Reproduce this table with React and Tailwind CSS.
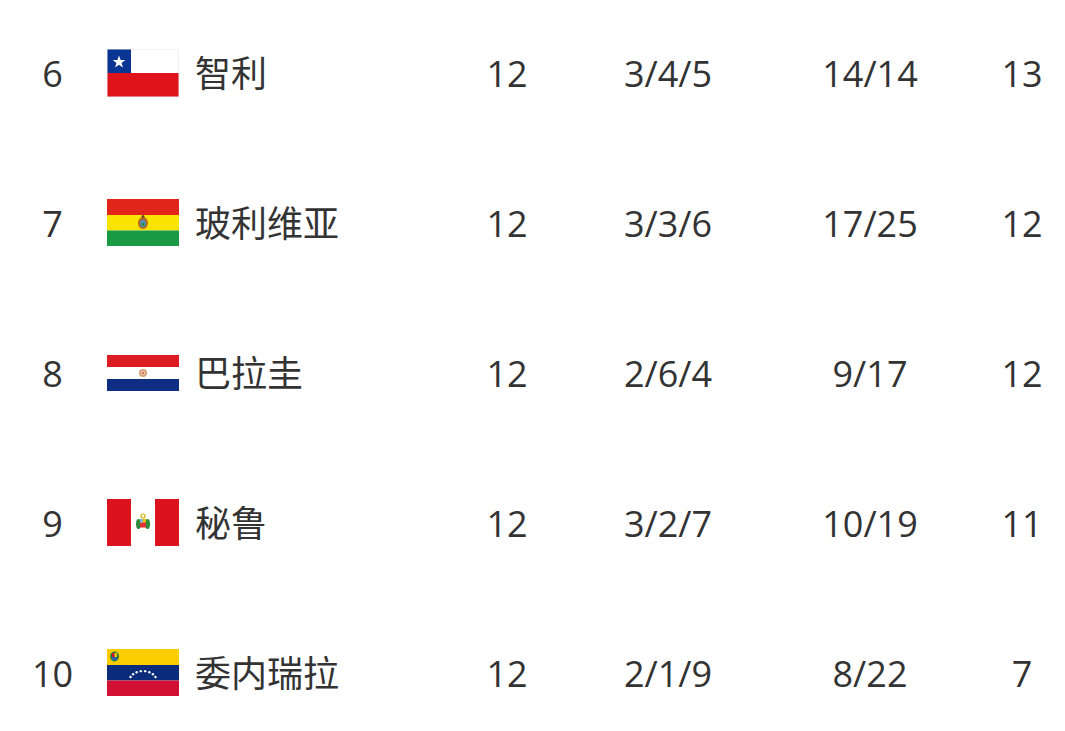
import React from "react";

const Chile = () => (
  <svg width="72" height="48" viewBox="0 0 72 48">
    <rect width="72" height="48" fill="#fff" />
    <rect y="24" width="72" height="24" fill="#e0131b" />
    <rect width="24" height="24" fill="#0b3593" />
    <polygon points="12,6.5 13.6,10.9 18.3,11 14.6,13.9 15.9,18.4 12,15.8 8.1,18.4 9.4,13.9 5.7,11 10.4,10.9" fill="#fff" />
    <rect x="0.25" y="0.25" width="71.5" height="47.5" fill="none" stroke="#e5e5e5" strokeWidth="0.5" />
  </svg>
);

const Bolivia = () => (
  <svg width="72" height="47" viewBox="0 0 72 47">
    <rect width="72" height="16" fill="#e1251b" />
    <rect y="16" width="72" height="15.5" fill="#f9e300" />
    <rect y="31.5" width="72" height="15.5" fill="#1a9a45" />
    <ellipse cx="36" cy="24" rx="5" ry="6" fill="#b5651d" />
    <ellipse cx="36" cy="24.5" rx="3" ry="3.8" fill="#4a90c0" />
    <rect x="34.5" y="24" width="3" height="3" fill="#3a8a3a" />
    <circle cx="36" cy="17.5" r="1.5" fill="#6b4a2a" />
  </svg>
);

const Paraguay = () => (
  <svg width="72" height="36" viewBox="0 0 72 36">
    <rect width="72" height="12" fill="#dd1b22" />
    <rect y="12" width="72" height="12" fill="#fff" />
    <rect y="24" width="72" height="12" fill="#0f2d83" />
    <circle cx="36" cy="18" r="4" fill="#d9a07a" />
    <circle cx="36" cy="18" r="2.2" fill="#e8c9a8" />
    <circle cx="36" cy="18" r="1" fill="#c0504a" />
  </svg>
);

const Peru = () => (
  <svg width="72" height="47" viewBox="0 0 72 47">
    <rect width="72" height="47" fill="#fff" />
    <rect width="24" height="47" fill="#dc131f" />
    <rect x="48" width="24" height="47" fill="#dc131f" />
    <ellipse cx="31.5" cy="25" rx="2.5" ry="5" fill="#2e8b3a" />
    <ellipse cx="40.5" cy="25" rx="2.5" ry="5" fill="#2e8b3a" />
    <circle cx="36" cy="17" r="2" fill="none" stroke="#d4b000" strokeWidth="1.2" />
    <rect x="33" y="20" width="6" height="3.5" fill="#f0c000" />
    <rect x="33" y="23.5" width="6" height="5" fill="#e03030" />
    <rect x="33" y="20" width="3" height="3.5" fill="#7fb5d8" />
  </svg>
);

const Venezuela = () => {
  const stars = [];
  for (let i = 0; i < 8; i++) {
    const a = Math.PI * (0.85 - (0.7 * i) / 7);
    stars.push(
      <circle key={i} cx={36 + 14 * Math.cos(a)} cy={33 - 11 * Math.sin(a)} r="1.2" fill="#fff" />
    );
  }
  return (
    <svg width="72" height="47" viewBox="0 0 72 47">
      <rect width="72" height="16" fill="#fdcd00" />
      <rect y="16" width="72" height="15.5" fill="#0a2a7a" />
      <rect y="31.5" width="72" height="15.5" fill="#d21034" />
      {stars}
      <ellipse cx="7.5" cy="7.5" rx="4.5" ry="5" fill="#2e7a3a" />
      <rect x="5" y="4" width="2.5" height="4" fill="#d21034" />
      <rect x="7.5" y="4" width="2.5" height="4" fill="#f0c000" />
      <rect x="5" y="8" width="5" height="3" fill="#2a5fb0" />
    </svg>
  );
};

const rows = [
  { rank: "6", Flag: Chile, name: "智利", p: "12", wdl: "3/4/5", g: "14/14", pts: "13" },
  { rank: "7", Flag: Bolivia, name: "玻利维亚", p: "12", wdl: "3/3/6", g: "17/25", pts: "12" },
  { rank: "8", Flag: Paraguay, name: "巴拉圭", p: "12", wdl: "2/6/4", g: "9/17", pts: "12" },
  { rank: "9", Flag: Peru, name: "秘鲁", p: "12", wdl: "3/2/7", g: "10/19", pts: "11" },
  { rank: "10", Flag: Venezuela, name: "委内瑞拉", p: "12", wdl: "2/1/9", g: "8/22", pts: "7" },
];

export default function App() {
  return (
    <div
      className="w-[1065px] h-[731px] bg-white overflow-hidden text-[#333333] text-[36px]"
      style={{ fontFamily: '"Open Sans", "Noto Sans CJK SC", sans-serif' }}
    >
      <div className="-mt-[1px] flex flex-col">
        {rows.map((r) => (
          <div key={r.rank} className="h-[150px] flex items-center">
            <div className="w-[105px] text-center">{r.rank}</div>
            <div className="w-[72px] ml-[2px] mb-[3px] flex items-center">
              <r.Flag />
            </div>
            <div className="w-[235px] ml-[16px]">{r.name}</div>
            <div className="w-[154px] text-center">{r.p}</div>
            <div className="w-[168px] text-center">{r.wdl}</div>
            <div className="w-[236px] text-center">{r.g}</div>
            <div className="w-[68px] text-center">{r.pts}</div>
          </div>
        ))}
      </div>
    </div>
  );
}
